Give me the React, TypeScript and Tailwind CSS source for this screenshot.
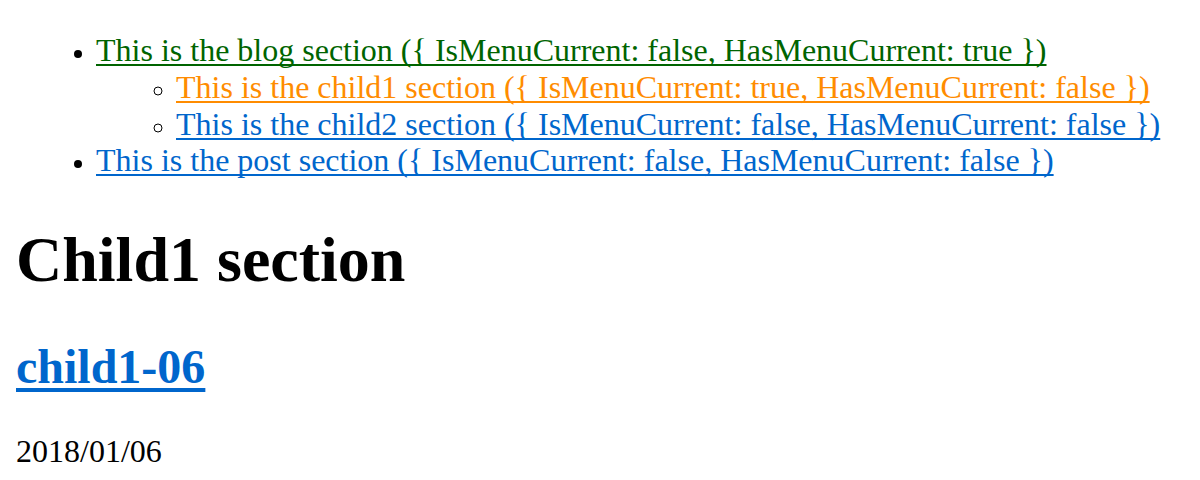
const sections = [
  {
    label: "This is the blog section ({ IsMenuCurrent: false, HasMenuCurrent: true })",
    color: "text-[#006400]",
    children: [
      {
        label: "This is the child1 section ({ IsMenuCurrent: true, HasMenuCurrent: false })",
        color: "text-[#ff8c00]",
      },
      {
        label: "This is the child2 section ({ IsMenuCurrent: false, HasMenuCurrent: false })",
        color: "text-[#0066cc]",
      },
    ],
  },
  {
    label: "This is the post section ({ IsMenuCurrent: false, HasMenuCurrent: false })",
    color: "text-[#0066cc]",
    children: [],
  },
];

const link = "underline decoration-[2px] underline-offset-[3px] [text-decoration-skip-ink:none]";

export default function App() {
  return (
    <div className="min-h-[480px] bg-white px-4 pt-4 font-['Liberation_Serif','Times_New_Roman',serif] text-black">
      <ul className="mt-4 mb-8 list-disc pl-20 text-[32px] leading-[36.8px] marker:text-[26px]">
        {sections.map((s) => (
          <li key={s.label}>
            <a href="#" className={`${link} ${s.color}`}>
              {s.label}
            </a>
            {s.children.length > 0 && (
              <ul className="list-[circle] pl-20">
                {s.children.map((c) => (
                  <li key={c.label}>
                    <a href="#" className={`${link} ${c.color}`}>
                      {c.label}
                    </a>
                  </li>
                ))}
              </ul>
            )}
          </li>
        ))}
      </ul>

      <h1 className="mt-[44px] mb-[42px] text-[64px] font-bold leading-[73.6px]">Child1 section</h1>

      <h2 className="mt-[42px] mb-[39px] text-[48px] font-bold leading-[55.2px]">
        <a
          href="#"
          className="text-[#0066cc] underline decoration-[4px] underline-offset-[5px] [text-decoration-skip-ink:none]"
        >
          child1-06
        </a>
      </h2>

      <p className="mt-8 mb-0 text-[32px] leading-[36.8px]">2018/01/06</p>
    </div>
  );
}
